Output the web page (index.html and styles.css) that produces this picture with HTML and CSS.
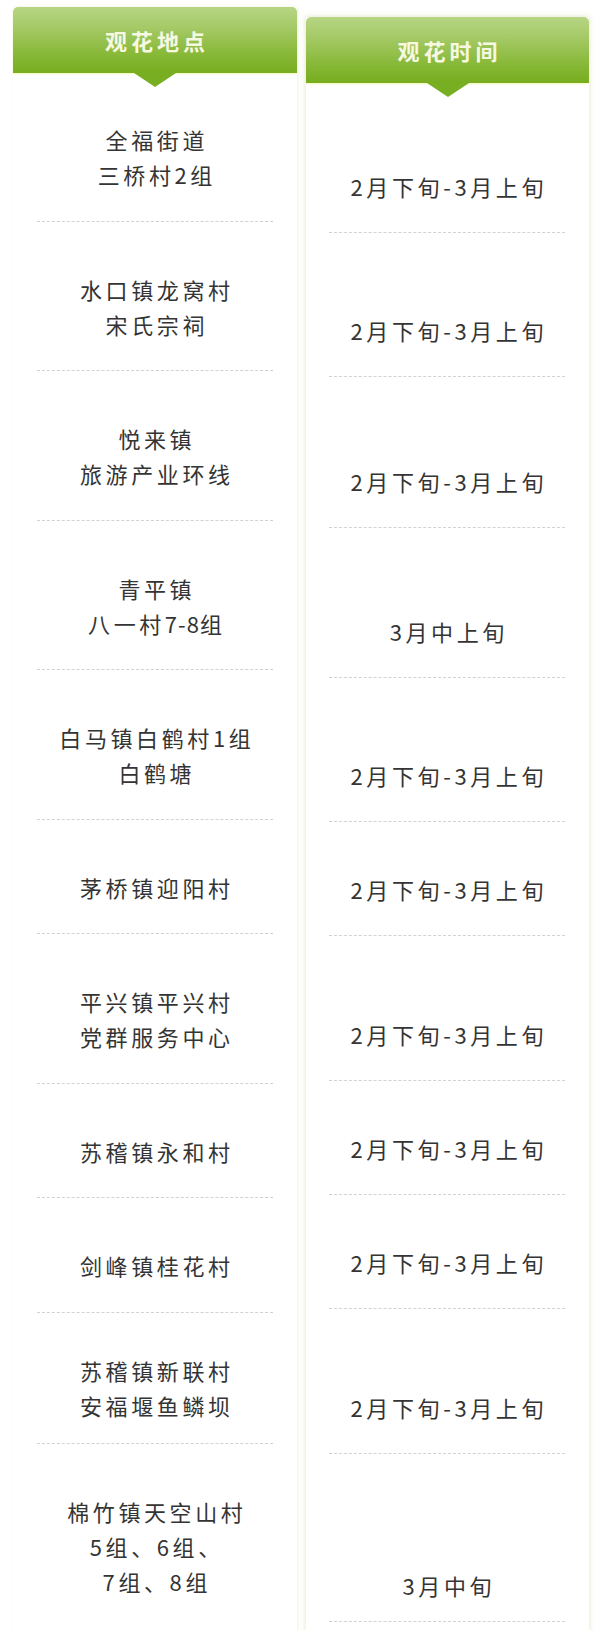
FILE: index.html
```html
<!DOCTYPE html>
<html lang="zh-CN">
<head>
<meta charset="utf-8">
<title>观花地点与时间</title>
<link rel="stylesheet" href="styles.css">
</head>
<body>
<div class="table">
  <div class="col col-place">
    <div class="head"><span class="head-text">观花地点</span></div>
    <div class="cell first"><p>全福街道</p><p>三桥村2组</p></div>
    <div class="cell"><p>水口镇龙窝村</p><p>宋氏宗祠</p></div>
    <div class="cell"><p>悦来镇</p><p>旅游产业环线</p></div>
    <div class="cell"><p>青平镇</p><p>八一村<span class="num">7-8</span>组</p></div>
    <div class="cell"><p>白马镇白鹤村1组</p><p>白鹤塘</p></div>
    <div class="cell"><p>茅桥镇迎阳村</p></div>
    <div class="cell"><p>平兴镇平兴村</p><p>党群服务中心</p></div>
    <div class="cell"><p>苏稽镇永和村</p></div>
    <div class="cell"><p>剑峰镇桂花村</p></div>
    <div class="cell tight"><p>苏稽镇新联村</p><p>安福堰鱼鳞坝</p></div>
    <div class="cell last"><p>棉竹镇天空山村</p><p>5组、6组、</p><p>7组、8组</p></div>
  </div>
  <div class="col col-time">
    <div class="head"><span class="head-text">观花时间</span></div>
    <div class="tcell h150"><p>2月下旬-3月上旬</p></div>
    <div class="tcell h144"><p>2月下旬-3月上旬</p></div>
    <div class="tcell h151"><p>2月下旬-3月上旬</p></div>
    <div class="tcell h150"><p>3月中上旬</p></div>
    <div class="tcell h144"><p>2月下旬-3月上旬</p></div>
    <div class="tcell h114"><p>2月下旬-3月上旬</p></div>
    <div class="tcell h145"><p>2月下旬-3月上旬</p></div>
    <div class="tcell h114"><p>2月下旬-3月上旬</p></div>
    <div class="tcell h114"><p>2月下旬-3月上旬</p></div>
    <div class="tcell h145"><p>2月下旬-3月上旬</p></div>
    <div class="tcell h168 tlast"><p>3月中旬</p></div>
  </div>
</div>
</body>
</html>
```

FILE: styles.css
```css
html, body {
  margin: 0;
  padding: 0;
  background: #ffffff;
}

body {
  font-family: "Noto Sans CJK SC", "Noto Sans", sans-serif;
  color: #343434;
  height: 1630px;
  overflow: hidden;
}

.table {
  display: flex;
  align-items: flex-start;
  gap: 9px;
  padding-left: 13px;
}

.col {
  display: flex;
  flex-direction: column;
  background: #ffffff;
  min-height: 1700px;
}

.col-place {
  width: 284px;
  margin-top: 7px;
  box-shadow: 1px 0 3px rgba(225, 222, 200, 0.45);
}

.col-time {
  width: 283px;
  margin-top: 17px;
  box-shadow: 0 0 5px 1px rgba(232, 228, 200, 0.75);
}

.head {
  position: relative;
  height: 66px;
  border-radius: 5px 5px 0 0;
  background: linear-gradient(to bottom, #b7d585 0%, #a2c862 35%, #85b734 75%, #77ad20 100%);
  display: flex;
  align-items: center;
  justify-content: center;
  box-shadow: 0 1px 2px rgba(240, 245, 170, 0.9);
}

.head::after {
  content: "";
  position: absolute;
  left: 50%;
  bottom: -14px;
  margin-left: -21px;
  width: 0;
  height: 0;
  border-left: 21px solid transparent;
  border-right: 21px solid transparent;
  border-top: 14px solid #78ae22;
}

.head-text {
  color: #f6f8e2;
  font-size: 22px;
  font-weight: 700;
  letter-spacing: 4px;
  padding-left: 4px;
  line-height: 1;
}

.cell {
  margin: 0 24px;
  padding: 50px 0 28.5px;
  border-bottom: 1px dashed #d2d2d2;
  text-align: center;
}

.cell.first {
  padding-top: 49px;
}

.cell.tight {
  padding-top: 40px;
  padding-bottom: 20px;
}

.cell.last {
  padding-top: 50px;
  border-bottom: none;
}

.cell p,
.tcell p {
  margin: 0;
  font-size: 22px;
  line-height: 35px;
  letter-spacing: 3.6px;
  padding-left: 3.6px;
  white-space: nowrap;
}

.num {
  letter-spacing: 1px;
}

.tcell {
  margin: 0 24px 0 23px;
  padding-bottom: 28px;
  border-bottom: 1px dashed #d2d2d2;
  display: flex;
  flex-direction: column;
  justify-content: flex-end;
  align-items: center;
  box-sizing: border-box;
}

.tcell.tlast {
  padding-bottom: 18px;
}

.h114 { height: 114px; }
.h144 { height: 144px; }
.h145 { height: 145px; }
.h150 { height: 150px; }
.h151 { height: 151px; }
.h168 { height: 168px; }
```
